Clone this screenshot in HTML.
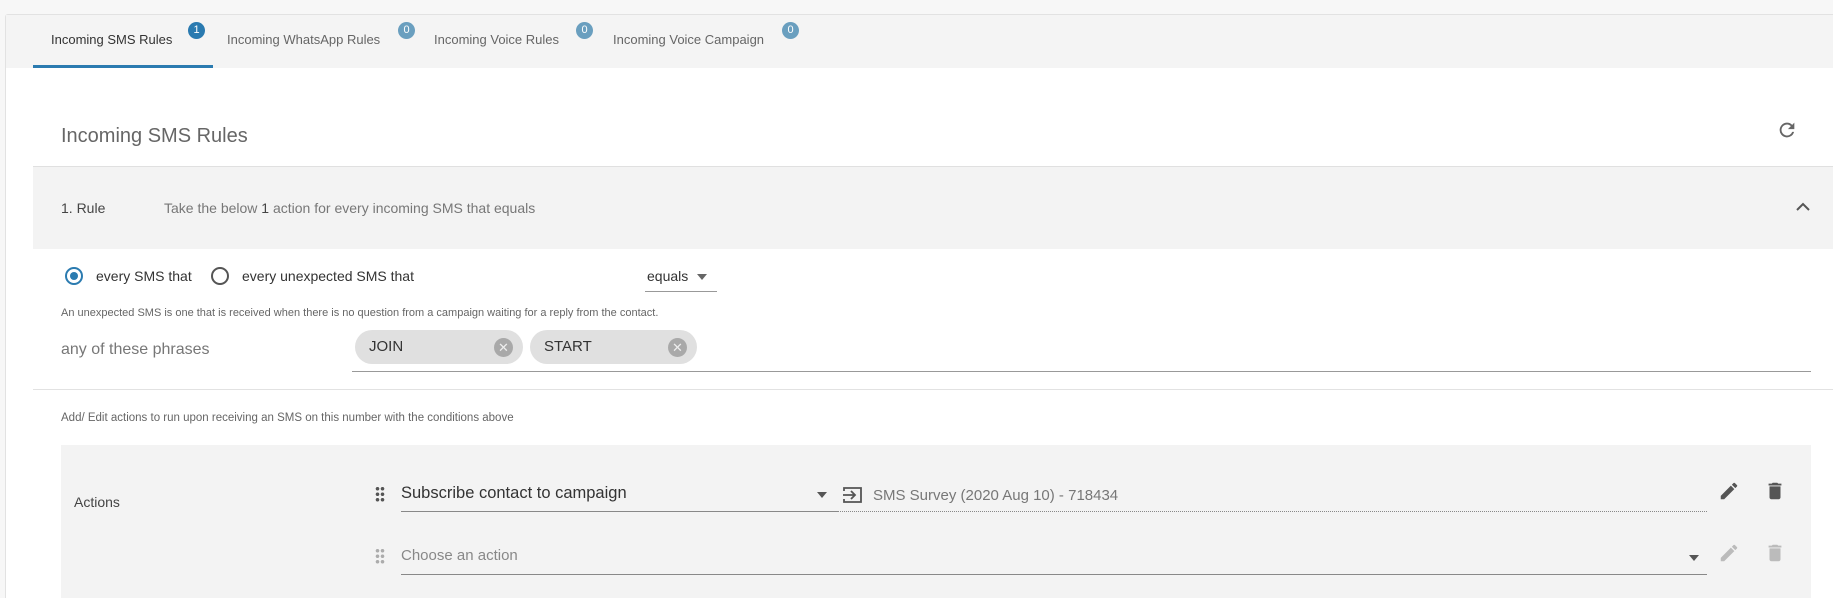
<!DOCTYPE html>
<html style="width:1833px;height:598px;overflow:hidden"><head><meta charset="utf-8"><style>
*{box-sizing:border-box;margin:0;padding:0}
body{width:1833px;height:598px;overflow:hidden;background:#f7f7f7;font-family:"Liberation Sans",sans-serif;position:relative;color:#333}
.a{position:absolute;white-space:nowrap}
.card{position:absolute;left:5px;top:14px;width:1840px;height:600px;background:#fff;border:1px solid #e2e2e2;border-bottom:none;border-radius:3px}
.tabs{position:absolute;left:6px;top:15px;width:1830px;height:53px;background:#f4f4f4}
.tab{font-size:13px;color:#666;top:32px}
.badge{position:absolute;width:17px;height:17px;border-radius:50%;background:#6a9fbf;color:#fff;font-size:11px;text-align:center;line-height:17px;top:22px}
.chip{position:absolute;top:330px;height:34px;border-radius:17px;background:#e0e0e0;font-size:15px;line-height:34px;padding-left:14px;color:#333}
.x{position:absolute;right:10px;top:8px;width:19px;height:19px;border-radius:50%;background:#a9a9a9;color:#eee;font-size:13px;line-height:19px;text-align:center}
.dots{position:absolute;width:10px;height:16px;background:radial-gradient(circle,#555 1.6px,transparent 2px) 0 0/5px 5.5px}
</style></head><body>
<div class="card"></div>
<div class="tabs"></div>
<div class="a tab" style="left:51px;color:#333">Incoming SMS Rules</div>
<div class="badge" style="left:188px;background:#2a7ab0">1</div>
<div class="a tab" style="left:227px">Incoming WhatsApp Rules</div>
<div class="badge" style="left:398px">0</div>
<div class="a tab" style="left:434px">Incoming Voice Rules</div>
<div class="badge" style="left:576px">0</div>
<div class="a tab" style="left:613px">Incoming Voice Campaign</div>
<div class="badge" style="left:782px">0</div>
<div class="a" style="left:33px;top:65px;width:180px;height:3px;background:#2b7bb0"></div>

<div class="a" style="left:61px;top:125px;font-size:20px;color:#666">Incoming SMS Rules</div>
<svg class="a" style="left:1776px;top:119px" width="22" height="22" viewBox="0 0 24 24"><path fill="#666" d="M17.65 6.35A7.958 7.958 0 0 0 12 4a8 8 0 1 0 7.73 10h-2.08A6 6 0 1 1 12 6c1.66 0 3.14.69 4.22 1.78L13 11h7V4l-2.35 2.35z"/></svg>

<div class="a" style="left:33px;top:166px;width:1800px;height:83px;background:#f3f3f3;border-top:1px solid #e0e0e0"></div>
<div class="a" style="left:61px;top:200px;font-size:14px;color:#444">1. Rule</div>
<div class="a" style="left:164px;top:200px;font-size:14px;color:#777">Take the below <b style="color:#444;font-weight:normal">1</b> action for every incoming SMS that equals</div>
<svg class="a" style="left:1795px;top:201px" width="16" height="12" viewBox="0 0 16 12"><path d="M2 9l6-6 6 6" stroke="#555" stroke-width="2" fill="none"/></svg>

<div class="a" style="left:65px;top:267px;width:18px;height:18px;border:2px solid #2b7bb0;border-radius:50%"></div>
<div class="a" style="left:70px;top:272px;width:8px;height:8px;background:#2b7bb0;border-radius:50%"></div>
<div class="a" style="left:96px;top:268px;font-size:14px">every SMS that</div>
<div class="a" style="left:211px;top:267px;width:18px;height:18px;border:2px solid #555;border-radius:50%"></div>
<div class="a" style="left:242px;top:268px;font-size:14px">every unexpected SMS that</div>
<div class="a" style="left:647px;top:268px;font-size:14px">equals</div>
<div class="a" style="left:697px;top:274px;border:5px solid transparent;border-top:6px solid #666"></div>
<div class="a" style="left:645px;top:291px;width:72px;height:1px;background:#999"></div>

<div class="a" style="left:61px;top:307px;font-size:11px;color:#666">An unexpected SMS is one that is received when there is no question from a campaign waiting for a reply from the contact.</div>
<div class="a" style="left:61px;top:341px;font-size:16px;color:#777">any of these phrases</div>
<div class="chip" style="left:355px;width:168px">JOIN<div class="x">✕</div></div>
<div class="chip" style="left:530px;width:167px">START<div class="x">✕</div></div>
<div class="a" style="left:352px;top:371px;width:1459px;height:1px;background:#999"></div>
<div class="a" style="left:33px;top:389px;width:1800px;height:1px;background:#e2e2e2"></div>

<div class="a" style="left:61px;top:412px;font-size:11.5px;color:#666">Add/ Edit actions to run upon receiving an SMS on this number with the conditions above</div>
<div class="a" style="left:61px;top:445px;width:1750px;height:153px;background:#f3f3f3"></div>
<div class="a" style="left:74px;top:494px;font-size:14px;color:#444">Actions</div>

<div class="dots" style="left:375px;top:486px"></div>
<div class="a" style="left:401px;top:484px;font-size:16.5px;color:#333">Subscribe contact to campaign</div>
<div class="a" style="left:401px;top:511px;width:436px;height:1px;background:#888"></div>
<div class="a" style="left:817px;top:492px;border:5px solid transparent;border-top:6px solid #555"></div>
<svg class="a" style="left:841px;top:483px" width="24" height="24" viewBox="0 0 24 24"><path d="M3 8V5h17v14H3v-3" stroke="#555" stroke-width="1.8" fill="none"/><path d="M2 12h12M10 8l4 4-4 4" stroke="#555" stroke-width="1.8" fill="none"/></svg>
<div class="a" style="left:873px;top:487px;font-size:15px;color:#777">SMS Survey (2020 Aug 10) - 718434</div>
<div class="a" style="left:837px;top:511px;width:870px;border-top:1px dotted #888"></div>
<svg class="a" style="left:1718px;top:480px" width="22" height="22" viewBox="0 0 24 24"><path fill="#555" d="M3 17.25V21h3.75L17.8 9.94l-3.75-3.75L3 17.25zM20.7 7.04a1 1 0 0 0 0-1.41l-2.34-2.34a1 1 0 0 0-1.41 0l-1.83 1.83 3.75 3.75 1.83-1.83z"/></svg>
<svg class="a" style="left:1764px;top:479px" width="22" height="24" viewBox="0 0 24 24"><path fill="#555" d="M6 19c0 1.1.9 2 2 2h8c1.1 0 2-.9 2-2V7H6v12zM19 4h-3.5l-1-1h-5l-1 1H5v2h14V4z"/></svg>

<div class="dots" style="left:375px;top:548px;opacity:.45"></div>
<div class="a" style="left:401px;top:547px;font-size:15px;color:#888">Choose an action</div>
<div class="a" style="left:401px;top:574px;width:1306px;height:1px;background:#888"></div>
<div class="a" style="left:1689px;top:555px;border:5px solid transparent;border-top:6px solid #555"></div>
<svg class="a" style="left:1718px;top:542px" width="22" height="22" viewBox="0 0 24 24"><path fill="#bbb" d="M3 17.25V21h3.75L17.8 9.94l-3.75-3.75L3 17.25zM20.7 7.04a1 1 0 0 0 0-1.41l-2.34-2.34a1 1 0 0 0-1.41 0l-1.83 1.83 3.75 3.75 1.83-1.83z"/></svg>
<svg class="a" style="left:1764px;top:541px" width="22" height="24" viewBox="0 0 24 24"><path fill="#bbb" d="M6 19c0 1.1.9 2 2 2h8c1.1 0 2-.9 2-2V7H6v12zM19 4h-3.5l-1-1h-5l-1 1H5v2h14V4z"/></svg>
</body></html>
